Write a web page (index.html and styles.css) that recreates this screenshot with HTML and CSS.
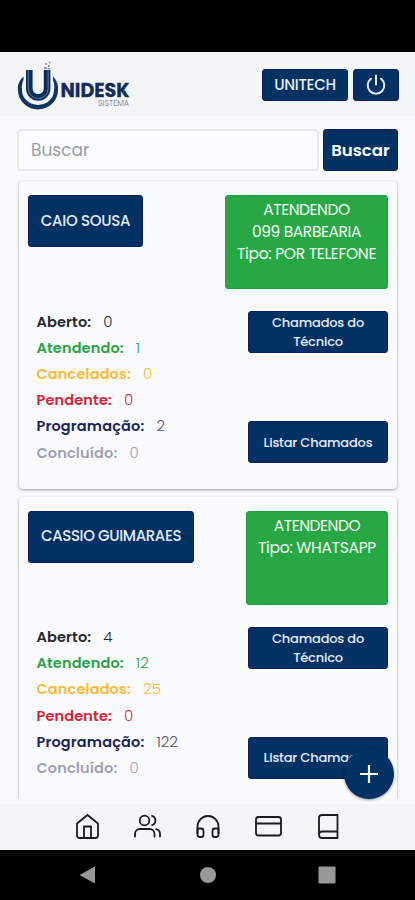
FILE: index.html
```html
<!DOCTYPE html>
<html lang="pt-br">
<head>
    <meta charset="UTF-8">
    <meta name="viewport" content="width=device-width, initial-scale=1.0">
    <title>Unidesk Sistema</title>
    <link rel="stylesheet" href="styles.css">
</head>
<body>
    <div class="status-bar"></div>

    <header class="header">
        <svg class="logo" width="114" height="52" viewBox="0 0 114 52">
            <path d="M6.500 16.500 C1.500 21 0.500 26 1 30 A20 19.500 0 0 0 41 30 C41.500 26 40.500 21 36 16.500 L36 20 C37.500 24 37.500 27 37 30 A16 15 0 0 1 5 30 C4.500 26 5 23 6.500 20z" fill="#123463"/>
            <path d="M12.300 10 V28.500 A8.900 8.900 0 0 0 30.100 28.500 V10" fill="none" stroke="#0d2d60" stroke-width="6.600"/>
            <path d="M11.300 10 V28.500 A9.900 9.900 0 0 0 31.100 28.500 V10" fill="none" stroke="#5f7f9f" stroke-width="1"/>
            <path d="M27 7h3v2h-3zM31 5h2v2h-2zM30.500 8h3v1.500h-3zM28 3h2v2h-2zM32 1.500h1.500v2H32z" fill="#8b9bae"/>
            <text class="logo-name" x="43.500" y="36.500" textLength="69" lengthAdjust="spacingAndGlyphs">NIDESK</text>
            <text class="logo-sub" x="81" y="45.500" textLength="31" lengthAdjust="spacingAndGlyphs">SISTEMA</text>
        </svg>
        <div class="header-buttons">
            <button class="btn btn-company">UNITECH</button>
            <button class="btn btn-power" aria-label="Sair">
                <svg width="22" height="22" viewBox="0 0 22 22" fill="none" stroke="#e6ebf4" stroke-width="2" stroke-linecap="round">
                    <path d="M11 1.500v9M6 4.800a8.300 8.300 0 1 0 10 0"/>
                </svg>
            </button>
        </div>
    </header>

    <main class="content">
        <form class="search">
            <input class="search-input" type="text" placeholder="Buscar">
            <button class="btn btn-search" type="button">Buscar</button>
        </form>

        <section class="card">
            <div class="card-head">
                <button class="btn btn-name name-caio">CAIO SOUSA</button>
                <div class="status status-wide">
                    <span class="status-title">ATENDENDO</span>
                    <span class="status-client">099 BARBEARIA</span>
                    <span class="status-type">Tipo: POR TELEFONE</span>
                </div>
            </div>
            <div class="card-body">
                <ul class="totals">
                    <li class="aberto"><b>Aberto:</b><span>0</span></li>
                    <li class="atendendo"><b>Atendendo:</b><span>1</span></li>
                    <li class="cancelados"><b>Cancelados:</b><span>0</span></li>
                    <li class="pendente"><b>Pendente:</b><span>0</span></li>
                    <li class="programacao"><b>Programação:</b><span>2</span></li>
                    <li class="concluido"><b>Concluído:</b><span>0</span></li>
                </ul>
                <div class="actions">
                    <button class="btn btn-action">Chamados do<br>Técnico</button>
                    <button class="btn btn-action">Listar Chamados</button>
                </div>
            </div>
        </section>

        <section class="card">
            <div class="card-head">
                <button class="btn btn-name name-cassio">CASSIO GUIMARAES</button>
                <div class="status">
                    <span class="status-title">ATENDENDO</span>
                    <span class="status-type">Tipo: WHATSAPP</span>
                </div>
            </div>
            <div class="card-body">
                <ul class="totals">
                    <li class="aberto"><b>Aberto:</b><span>4</span></li>
                    <li class="atendendo"><b>Atendendo:</b><span>12</span></li>
                    <li class="cancelados"><b>Cancelados:</b><span>25</span></li>
                    <li class="pendente"><b>Pendente:</b><span>0</span></li>
                    <li class="programacao"><b>Programação:</b><span>122</span></li>
                    <li class="concluido"><b>Concluído:</b><span>0</span></li>
                </ul>
                <div class="actions">
                    <button class="btn btn-action">Chamados do<br>Técnico</button>
                    <button class="btn btn-action">Listar Chamados</button>
                </div>
            </div>
        </section>
    </main>

    <button class="fab" aria-label="Novo chamado">
        <svg width="20" height="20" viewBox="0 0 20 20" stroke="#fff" stroke-width="2.2"><path d="M10 1v18M1 10h18"/></svg>
    </button>

    <nav class="tabs">
        <svg class="tab" viewBox="0 0 28 28"><path d="M4 11.500 14.500 3 25 11.500V23.500a2.500 2.500 0 0 1-2.500 2.500h-16A2.500 2.500 0 0 1 4 23.500z"/><path d="M11 26V14.500h7V26"/></svg>
        <svg class="tab" viewBox="0 0 28 28"><circle cx="11.500" cy="8.500" r="4.800"/><path d="M2 24.500V22a5 5 0 0 1 5-5h9.500a5 5 0 0 1 5 5v2.500M19 3.900a4.800 4.800 0 0 1 0 9.200M27 24.500V22a5 5 0 0 0-3.800-4.800"/></svg>
        <svg class="tab" viewBox="0 0 28 28"><path d="M3.500 21v-6.500a10.500 10.500 0 0 1 21 0V21"/><path d="M24.500 22.500a2.500 2.500 0 0 1-2.500 2.500h-1a2.500 2.500 0 0 1-2.500-2.500V19a2.500 2.500 0 0 1 2.500-2.500h3.500zM3.500 22.500A2.500 2.500 0 0 0 6 25h1a2.500 2.500 0 0 0 2.500-2.500V19A2.500 2.500 0 0 0 7 16.500H3.500z"/></svg>
        <svg class="tab" viewBox="0 0 28 28"><rect x="2" y="5" width="25" height="18.500" rx="2.500"/><path d="M2 11.500h25"/></svg>
        <svg class="tab" viewBox="0 0 28 28"><path d="M5 22.500a3 3 0 0 1 3-3h15.500M8 3h15.500v23H8a3 3 0 0 1-3-3V6a3 3 0 0 1 3-3z"/></svg>
    </nav>

    <footer class="system-bar">
        <svg class="sys" viewBox="0 0 18 18"><path d="M0.500 9 16 0.500v17z"/></svg>
        <svg class="sys" viewBox="0 0 18 18"><circle cx="9" cy="9" r="8"/></svg>
        <svg class="sys" viewBox="0 0 18 18"><rect x="0.500" y="0.500" width="17" height="17" rx="1"/></svg>
    </footer>
</body>
</html>
```

FILE: styles.css
```css
* {
    box-sizing: border-box;
}

body {
    margin: 0;
    height: 900px;
    display: flex;
    flex-direction: column;
    overflow: hidden;
    position: relative;
    background-color: #f9fafc;
    font-family: Poppins, Inter, sans-serif;
}

button {
    font-family: inherit;
    cursor: pointer;
}

.status-bar {
    flex: none;
    height: 52px;
    background-color: #000;
}

.header {
    flex: none;
    height: 64px;
    padding: 0 16px 0 17px;
    display: flex;
    justify-content: space-between;
    background-color: #f4f5f7;
}

.logo {
    margin-top: 8px;
}

.logo-name {
    font-size: 19px;
    font-weight: 700;
    fill: #152c5b;
    stroke: #152c5b;
    stroke-width: 0.3px;
}

.logo-sub {
    font-size: 8px;
    fill: #8291a8;
}

.header-buttons {
    display: flex;
    gap: 5px;
    padding-top: 17px;
}

.btn {
    padding: 0;
    border: 1px solid #0b1f60;
    border-radius: 3px;
    background-color: #023164;
    color: #e6ebf5;
    font-weight: 500;
    white-space: nowrap;
}

.btn-company {
    width: 86px;
    height: 32px;
    padding-bottom: 2px;
    font-size: 15px;
    letter-spacing: -0.3px;
}

.btn-power {
    width: 46px;
    height: 32px;
    display: flex;
    align-items: center;
    justify-content: center;
}

.content {
    flex: none;
    height: 683px;
    padding: 13px 17px 0;
    overflow: hidden;
}

.search {
    display: flex;
    gap: 4px;
    margin-bottom: 10px;
}

.search-input {
    width: 302px;
    height: 42px;
    padding: 0 12px;
    border: 2px solid #e7e8eb;
    border-radius: 4px;
    background-color: #fbfcfd;
    font-family: inherit;
    font-size: 17px;
}

.search-input::placeholder {
    color: #9a9ca9;
}

.btn-search {
    width: 76px;
    height: 42px;
    color: #fff;
    font-size: 16.6px;
    font-weight: 600;
}

.card {
    height: 308px;
    margin: 0 1px 7.5px 2px;
    padding: 14px 9px 0;
    border-radius: 4px;
    background-color: #fafbfd;
    box-shadow: 0 1px 3px rgba(0, 0, 0, 0.38);
}

.card-head {
    height: 94px;
    display: flex;
    justify-content: space-between;
    align-items: flex-start;
}

.btn-name {
    height: 52px;
    padding-bottom: 2px;
    font-size: 15px;
}

.name-caio {
    width: 115px;
    letter-spacing: -0.3px;
}

.name-cassio {
    width: 166px;
    letter-spacing: -0.38px;
}

.status {
    width: 142px;
    height: 94px;
    padding-top: 3px;
    border: 1px solid #1ba13a;
    border-radius: 3px;
    background-color: #28a745;
    color: #f1fcf1;
    font-size: 15.5px;
    line-height: 22px;
    text-align: center;
    white-space: nowrap;
}

.status-wide {
    width: 163px;
}

.status span {
    display: block;
}

.status-title {
    letter-spacing: -0.45px;
}

.status-client {
    letter-spacing: -0.4px;
}

.status-type {
    letter-spacing: -0.3px;
}

.card-body {
    display: flex;
    justify-content: space-between;
    padding: 19.5px 0 0 8.5px;
}

.totals {
    margin: 0;
    padding: 0;
    list-style: none;
    font-size: 14.5px;
    line-height: 26.2px;
}

.totals li {
    display: flex;
    gap: 12px;
}

.totals b {
    font-weight: 600;
    letter-spacing: 0.15px;
}

.totals span {
    font-size: 15px;
    font-weight: 300;
}

.aberto {
    color: #26282c;
}

.atendendo {
    color: #26a344;
}

.cancelados {
    color: #fdb931;
}

.pendente {
    color: #d92036;
}

.programacao {
    color: #1b2259;
}

.programacao span {
    color: #50526b;
}

.concluido {
    color: #9da0b5;
}

.actions {
    height: 152px;
    margin-top: 2.5px;
    display: flex;
    flex-direction: column;
    justify-content: space-between;
}

.btn-action {
    width: 140px;
    height: 42px;
    font-size: 13px;
    line-height: 19px;
    letter-spacing: -0.2px;
}

.fab {
    position: absolute;
    left: 344px;
    top: 749px;
    width: 50px;
    height: 50px;
    padding: 0;
    display: flex;
    align-items: center;
    justify-content: center;
    border: none;
    border-radius: 50%;
    background-color: #023164;
    box-shadow: 0 1px 3px rgba(0, 0, 0, 0.4);
}

.tabs {
    flex: none;
    height: 46px;
    margin-top: 5px;
    padding: 0 73px 2px;
    display: flex;
    justify-content: space-between;
    align-items: center;
    background-color: #f4f5f7;
}

.tab {
    width: 28px;
    height: 28px;
    fill: none;
    stroke: #191b20;
    stroke-width: 1.8;
    stroke-linecap: round;
    stroke-linejoin: round;
}

.system-bar {
    flex: none;
    height: 50px;
    padding: 0 79px;
    display: flex;
    justify-content: space-between;
    align-items: center;
    background-color: #000;
}

.sys {
    width: 18px;
    height: 18px;
    fill: #999;
}
```
